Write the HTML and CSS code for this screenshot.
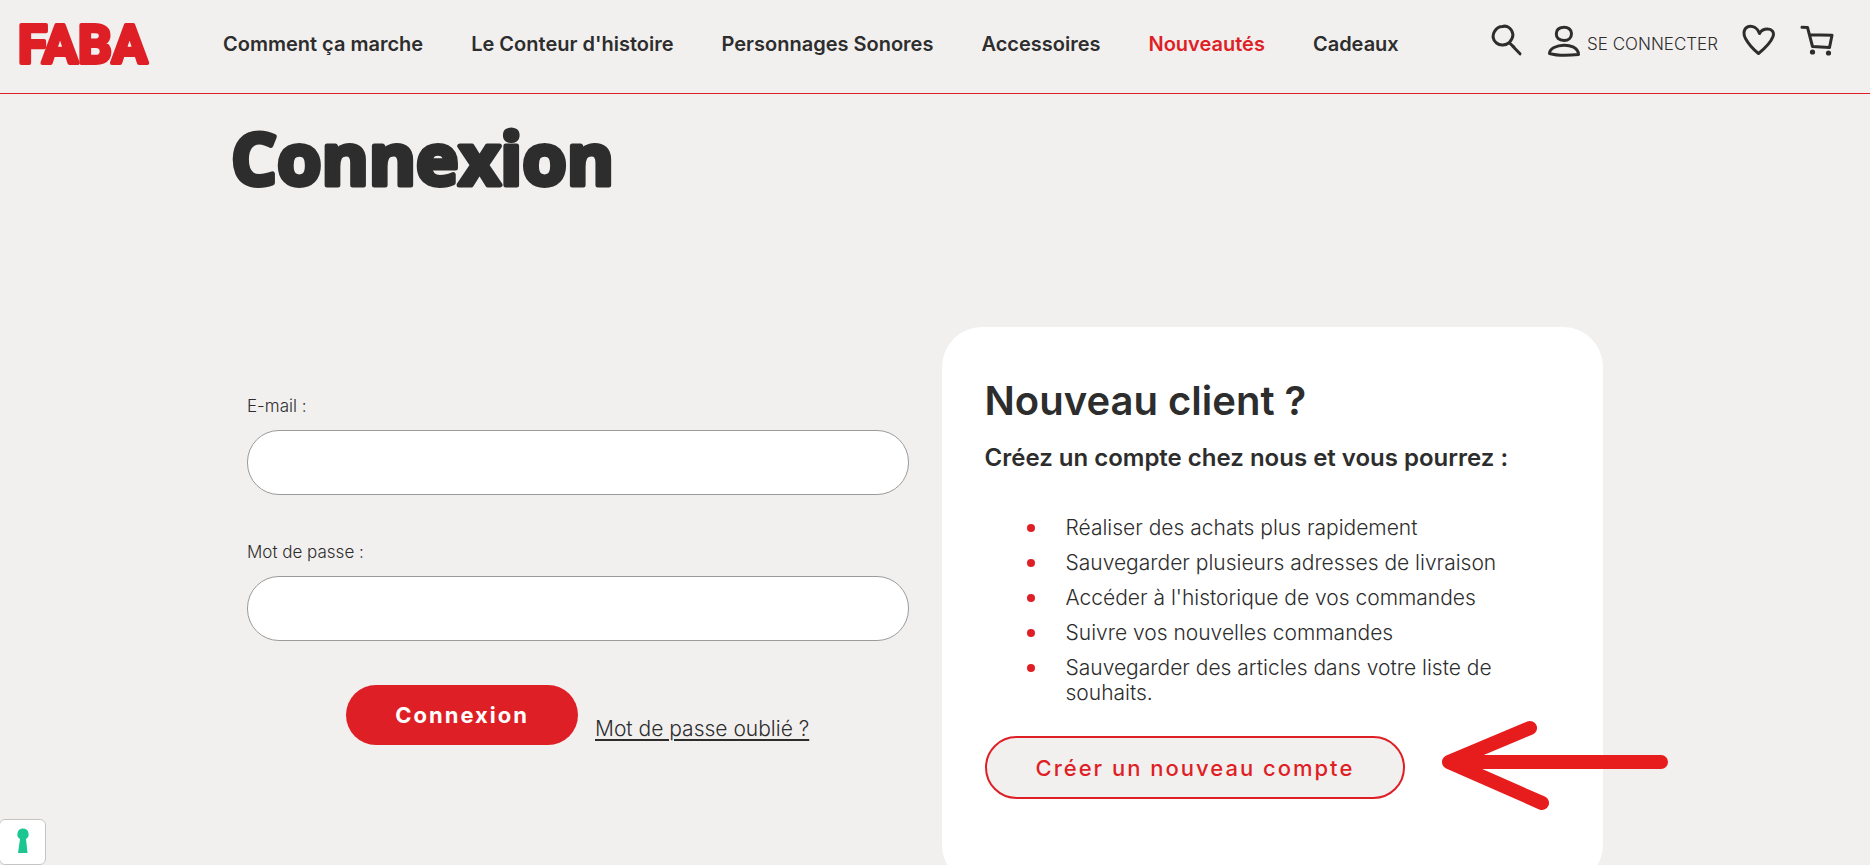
FILE: index.html
```html
<!DOCTYPE html>
<html lang="fr">
<head>
  <meta charset="UTF-8">
  <meta name="viewport" content="width=device-width, initial-scale=1.0">
  <title>Connexion - FABA</title>
  <link rel="stylesheet" href="styles.css">
</head>
<body>

<header class="header">
  <a class="logo" href="#" aria-label="FABA">
    <svg width="132" height="48" viewBox="0 0 132 48">
      <text x="0" y="43">FABA</text>
    </svg>
  </a>

  <nav class="menu">
    <a href="#">Comment ça marche</a>
    <a href="#">Le Conteur d'histoire</a>
    <a href="#">Personnages Sonores</a>
    <a href="#">Accessoires</a>
    <a href="#" class="active">Nouveautés</a>
    <a href="#">Cadeaux</a>
  </nav>

  <div class="tools">
    <a href="#" aria-label="Rechercher">
      <svg class="icon" width="32" height="34" viewBox="0 0 32 34">
        <path d="M11.500 2.500C16 1 21 4.500 21.800 10C22.300 13 20.500 16 18.500 18.300C15 21.500 9 22 5.500 19C1.500 16 1.300 11 3.500 7.500C5.500 4 8.500 2.500 11.500 2.500Z"/>
        <path d="M18.500 19L23 23.200M21.500 22L29 29.800"/>
      </svg>
    </a>
    <a href="#" class="account">
      <svg class="icon" width="34" height="34" viewBox="0 0 34 34">
        <path d="M16.500 3.300C21 3 24.300 5.500 24.500 9.500C24.500 14 21.500 16.500 17 16.500C12 16.500 9.200 14 9.300 9.800C9.400 6 12 3.500 16.500 3.300Z"/>
        <path d="M7 23.500C13 20.500 21 20.500 26 22.800C29.500 24.500 31.500 27.500 31.500 30.500C22 31.500 11 32 2.500 29.500C2.500 27 4.500 24.800 7 23.500Z"/>
      </svg>
      <span>SE CONNECTER</span>
    </a>
    <a href="#" aria-label="Liste de souhaits">
      <svg class="icon" width="34" height="34" viewBox="0 0 34 34">
        <path d="M17.500 9.500C15.500 4 11 1.500 6.500 2.500C1.500 4 1 10 3.500 14.500C6.500 20 12 26 16.500 29.500C22 25 29 18 31 12.500C32.500 8 30 5 25.500 5C22 5 19 6.500 17.500 9.500Z"/>
      </svg>
    </a>
    <a href="#" aria-label="Panier">
      <svg class="icon" width="34" height="34" viewBox="0 0 34 34">
        <path d="M2 3.200L7.500 3.400L12.500 22.500L29.500 23.500L32 11.300L10 10.700"/>
        <circle class="wheel" cx="12.500" cy="28" r="2.600"/>
        <circle class="wheel" cx="28.500" cy="29" r="2.600"/>
      </svg>
    </a>
  </div>
</header>

<main class="page">
  <h1>
    <svg width="400" height="96" viewBox="0 0 400 96">
      <text x="0" y="75">Connexion</text>
    </svg>
  </h1>

  <div class="columns">
    <form class="login">
      <div class="field">
        <label for="email">E-mail :</label>
        <input type="email" id="email" name="email">
      </div>
      <div class="field">
        <label for="password">Mot de passe :</label>
        <input type="password" id="password" name="password">
      </div>
      <div class="actions">
        <button type="submit" class="btn btn-primary">Connexion</button>
        <a href="#">Mot de passe oublié ?</a>
      </div>
    </form>

    <section class="card">
      <h2>Nouveau client ?</h2>
      <h3>Créez un compte chez nous et vous pourrez :</h3>
      <ul>
        <li>Réaliser des achats plus rapidement</li>
        <li>Sauvegarder plusieurs adresses de livraison</li>
        <li>Accéder à l'historique de vos commandes</li>
        <li>Suivre vos nouvelles commandes</li>
        <li>Sauvegarder des articles dans votre liste de souhaits.</li>
      </ul>
      <div class="signup">
        <button type="button" class="btn btn-outline">Créer un nouveau compte</button>
        <svg class="arrow" width="230" height="92" viewBox="0 0 230 92">
          <path d="M90 9L9 43L102 84M9 43H221"/>
        </svg>
      </div>
    </section>
  </div>
</main>

<button type="button" class="privacy" aria-label="Préférences de confidentialité">
  <svg width="14" height="26" viewBox="0 0 14 26">
    <path d="M7 0.500A5.700 5.700 0 0 1 10 11L11.500 25H2L4 11A5.700 5.700 0 0 1 7 0.500Z"/>
  </svg>
</button>

</body>
</html>
```
FILE: styles.css
```css
:root {
  --red: #df1f26;
  --dark: #2d2d2d;
  --background: #f2f0ef;
  --border: #9b9b9b;
}

* {
  box-sizing: border-box;
}

body {
  margin: 0;
  font-family: Inter, "Open Sans", sans-serif;
  font-weight: 300;
  color: var(--dark);
  background-color: var(--background);
}

a {
  color: inherit;
}

/* Header */
.header {
  display: flex;
  align-items: center;
  height: 94px;
  padding: 0 36px 6px 18px;
  border-bottom: 1px solid var(--red);
}

.header a {
  display: flex;
  text-decoration: none;
}

.logo svg {
  overflow: visible;
}

.logo text {
  font-family: Roboto, sans-serif;
  font-size: 53px;
  font-weight: 700;
  fill: var(--red);
  stroke: var(--red);
  stroke-width: 4px;
  stroke-linejoin: round;
}

.menu {
  display: flex;
  gap: 48px;
  margin-left: 73px;
  font-size: 20px;
  font-weight: 600;
  white-space: nowrap;
}

.menu .active {
  color: var(--red);
}

.tools {
  display: flex;
  gap: 24px;
  margin-left: auto;
  padding-bottom: 6px;
  font-size: 17px;
  white-space: nowrap;
}

.account {
  gap: 6px;
  align-items: center;
}

.account span {
  padding-top: 6px;
}

.icon {
  fill: none;
  stroke: var(--dark);
  stroke-width: 3px;
  stroke-linecap: round;
  stroke-linejoin: round;
}

.icon .wheel {
  fill: var(--dark);
  stroke: none;
}

/* Page */
.page {
  max-width: 1376px;
  margin: 0 auto;
  padding: 16px 20px 40px 0;
}

h1 {
  margin: 0 0 121px -16px;
  line-height: 96px;
}

h1 svg {
  display: block;
  overflow: visible;
}

h1 text {
  font-family: "Open Sans", sans-serif;
  font-size: 72px;
  font-weight: 700;
  fill: var(--dark);
  stroke: var(--dark);
  stroke-width: 5px;
  stroke-linejoin: round;
}

.columns {
  display: grid;
  grid-template-columns: 1fr 1fr;
  gap: 33px;
}

/* Login form */
.login {
  padding-top: 66px;
}

.field {
  margin-bottom: 44px;
}

.field label {
  display: block;
  margin-bottom: 10px;
  font-size: 17px;
  line-height: 27px;
}

.field input {
  display: block;
  width: 100%;
  height: 65px;
  padding: 0 32px;
  border: 1px solid var(--border);
  border-radius: 32px;
  background-color: white;
  font: inherit;
  font-size: 17px;
}

.actions {
  display: flex;
  justify-content: center;
  align-items: flex-end;
  gap: 17px;
  font-size: 21px;
  line-height: 32px;
}

.actions a {
  text-decoration-thickness: 2px;
  text-underline-offset: 3px;
}

.btn {
  padding: 0 49px;
  border-radius: 32px;
  font-family: inherit;
  font-size: 22px;
  letter-spacing: 2px;
  cursor: pointer;
}

.btn-primary {
  height: 60px;
  border: none;
  background-color: var(--red);
  color: white;
  font-weight: 700;
}

.btn-outline {
  height: 63px;
  border: 2px solid var(--red);
  background-color: var(--background);
  color: var(--red);
  font-weight: 500;
}

/* New customer card */
.card {
  padding: 49px 43px 86px;
  border-radius: 40px;
  background-color: white;
}

.card h2 {
  margin: 0 0 16px;
  font-size: 40px;
  line-height: 50px;
  font-weight: 600;
}

.card h3 {
  margin: 0;
  font-size: 24px;
  line-height: 32px;
  font-weight: 600;
}

.card ul {
  margin: 41px 0 31px;
  padding: 0 42px;
  list-style: none;
  font-size: 21px;
  line-height: 25px;
}

.card li {
  display: flex;
  gap: 31px;
  margin-bottom: 10px;
}

.card li::before {
  content: "";
  flex: none;
  width: 8px;
  height: 8px;
  margin-top: 9px;
  border-radius: 50%;
  background-color: var(--red);
}

.signup {
  position: relative;
}

.arrow {
  position: absolute;
  top: -17px;
  left: 455px;
  fill: none;
  stroke: #e71c1c;
  stroke-width: 14px;
  stroke-linecap: round;
  stroke-linejoin: round;
}

/* Privacy widget */
.privacy {
  position: fixed;
  left: -1px;
  bottom: 0;
  width: 47px;
  height: 46px;
  padding: 0;
  border: 1px solid #c4c4c4;
  border-radius: 6px;
  background-color: white;
}

.privacy path {
  fill: #1cc691;
}
```
